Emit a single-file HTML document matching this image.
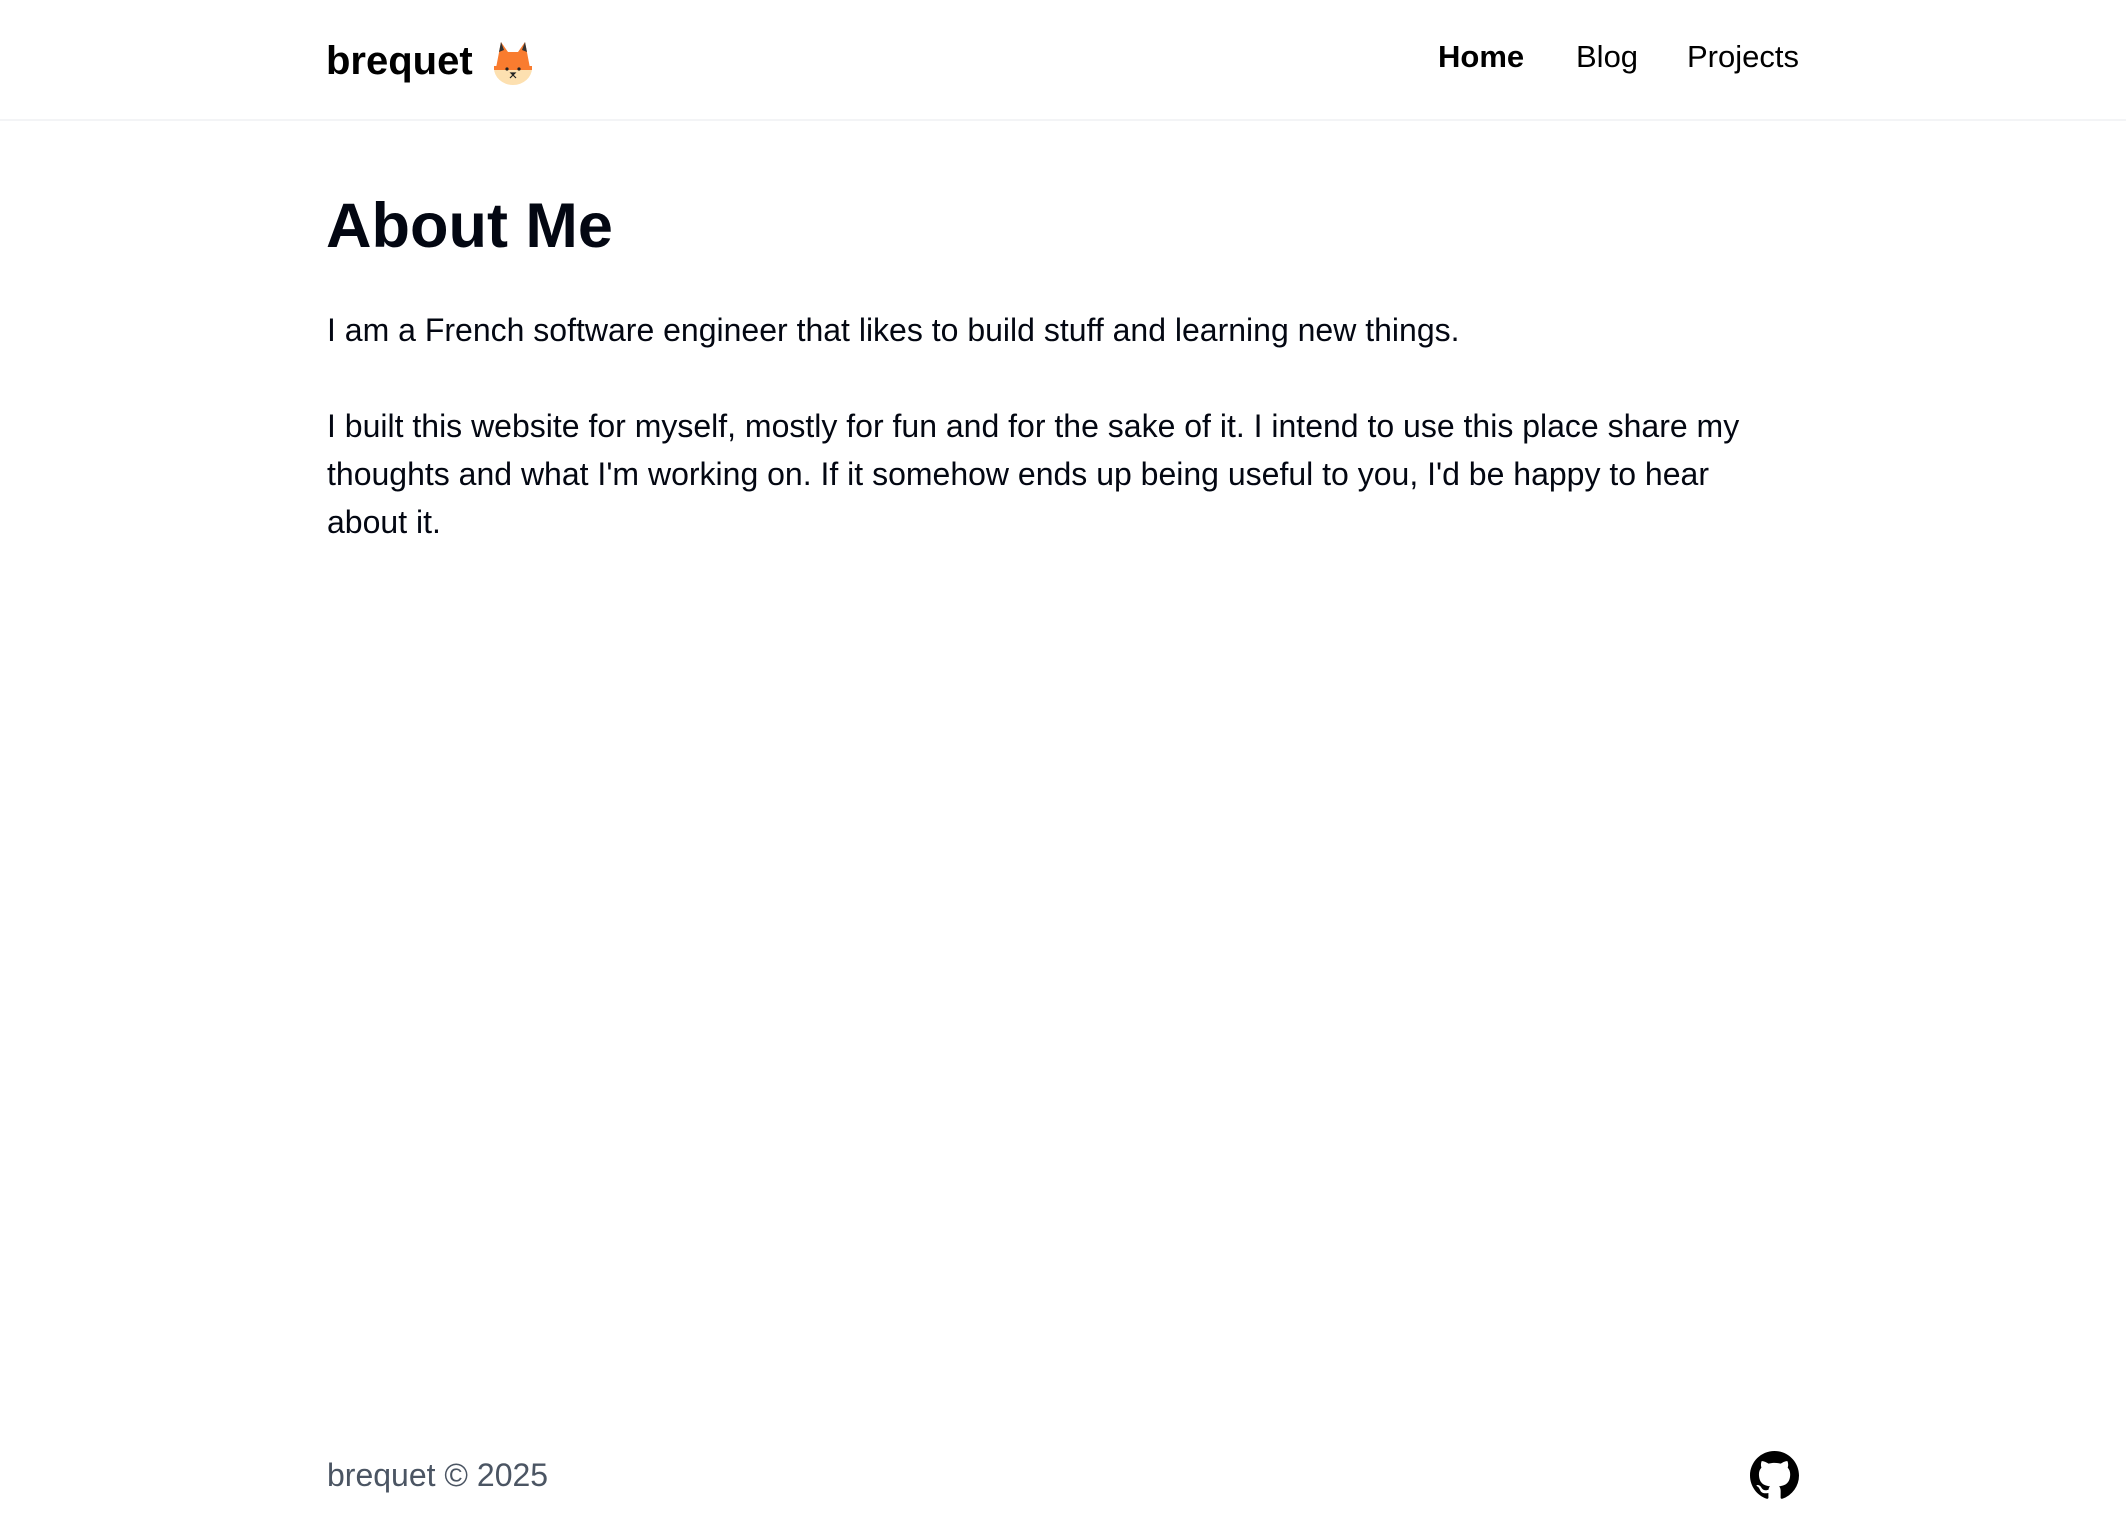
<!DOCTYPE html>
<html><head><meta charset="utf-8"><style>
html,body{margin:0;padding:0;background:#fff;}
body{width:2126px;height:1530px;position:relative;font-family:"Liberation Sans",sans-serif;overflow:hidden;}
.hdr{position:absolute;left:0;top:0;width:2126px;height:119px;border-bottom:2px solid #f3f4f6;}
.logo{position:absolute;left:326px;top:34px;font-size:40px;font-weight:bold;color:#000;line-height:54px;}
.fox{position:absolute;left:493px;top:38px;}
.nav{position:absolute;top:37px;font-size:31px;color:#000;line-height:40px;}
h1{position:absolute;left:326px;top:188px;margin:0;font-size:63px;line-height:76px;color:#030712;font-weight:bold;}
.p{position:absolute;left:327px;font-size:32px;line-height:48px;color:#030712;white-space:nowrap;margin:0;}
.ft{position:absolute;left:327px;top:1455px;font-size:32px;line-height:40px;color:#4b5563;}
</style></head><body>
<div class="hdr">
<div class="logo">brequet</div>
<svg class="fox" width="40" height="48" viewBox="0 0 40 48">
<path d="M3 30 L8 4 L15 14 L25 14 L32 4 L37 30 Z" fill="#f97c2f"/>
<path d="M8 4 L11 12 L6 14 Z M32 4 L29 12 L34 14 Z" fill="#333"/>
<path d="M1 30 H39 A19 17 0 0 1 1 30 Z" fill="#fde0b0"/>
<path d="M1 28 H39 V32 H1 Z" fill="#f97c2f"/>
<circle cx="14" cy="31" r="1.6" fill="#222"/><circle cx="26" cy="31" r="1.6" fill="#222"/>
<path d="M18 35 H22 L20 37 Z M20 37 L17 40 M20 37 L23 40" stroke="#222" stroke-width="1.2" fill="#222"/>
</svg>
<div class="nav" style="left:1438px;font-weight:bold;">Home</div>
<div class="nav" style="left:1576px;">Blog</div>
<div class="nav" style="left:1687px;">Projects</div>
</div>
<h1>About Me</h1>
<p class="p" style="top:306px;">I am a French software engineer that likes to build stuff and learning new things.</p>
<p class="p" style="top:402px;">I built this website for myself, mostly for fun and for the sake of it. I intend to use this place share my<br>thoughts and what I'm working on. If it somehow ends up being useful to you, I'd be happy to hear<br>about it.</p>
<div class="ft">brequet © 2025</div>
<svg style="position:absolute;left:1750px;top:1451px;" width="49" height="49" viewBox="0 0 16 16"><path fill="#000" d="M8 0C3.580 0 0 3.580 0 8c0 3.540 2.290 6.530 5.470 7.590.4.07.55-.17.55-.38 0-.19-.01-.82-.01-1.490-2.010.37-2.530-.49-2.690-.94-.09-.23-.48-.94-.82-1.130-.28-.15-.68-.52-.01-.53.63-.01 1.080.58 1.230.82.72 1.210 1.870.87 2.330.66.07-.52.28-.87.51-1.070-1.780-.2-3.640-.89-3.640-3.950 0-.87.31-1.590.82-2.150-.08-.2-.36-1.020.08-2.120 0 0 .67-.21 2.200.82.64-.18 1.320-.27 2-.27.68 0 1.360.09 2 .27 1.530-1.040 2.200-.82 2.200-.82.44 1.100.16 1.920.08 2.120.51.56.82 1.270.82 2.150 0 3.070-1.870 3.750-3.650 3.950.29.25.54.73.54 1.480 0 1.070-.01 1.930-.01 2.200 0 .21.15.46.55.38A8.013 8.013 0 0016 8c0-4.420-3.580-8-8-8z"/></svg>
</body></html>
